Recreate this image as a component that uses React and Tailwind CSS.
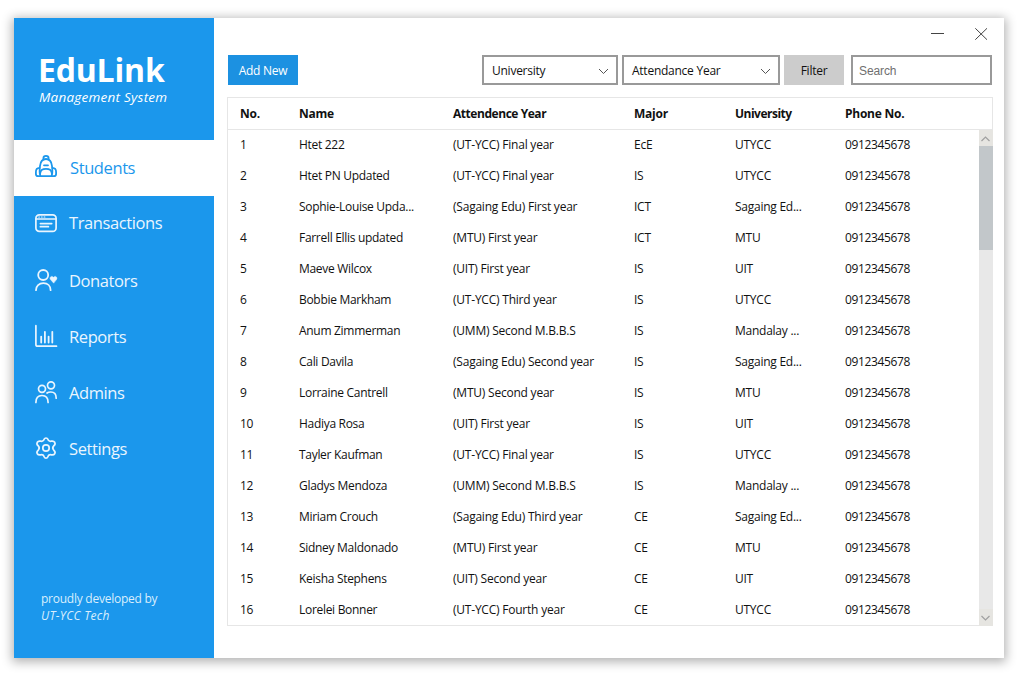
import React from 'react';

const icons = {
  students: (
    <g strokeWidth="1.8">
      <path d="M8.400 4V3.300a2.600 2.400 0 0 1 5.200 0V4" />
      <path d="M5.300 20.500C4.400 18 4.600 14 5 11c.5-4.400 2.700-7 6-7s5.500 2.600 6 7c.4 3 .6 7-.3 9.500" />
      <path d="M9 10.300h4" />
      <path d="M5.200 18.200c.2-2.700 2.600-4.300 5.800-4.300s5.600 1.600 5.800 4.300" />
      <path d="M4.500 12.900C2.200 13 .9 14.600.9 17v2c0 1.300.8 2.200 2.200 2.200h15.800c1.400 0 2.200-.9 2.200-2.200v-2c0-2.400-1.300-4-3.600-4.100" />
    </g>
  ),
  transactions: (
    <g strokeWidth="1.7">
      <rect x=".9" y="2.9" width="20.2" height="16.4" rx="3.4" />
      <path d="M1 7h20" strokeWidth="1.3" />
      <path d="M3.700 5h.8M6.400 5h.8M9.100 5h.8" strokeWidth="1.1" />
      <path d="M5.400 11.600h11.300M5.400 14.700h8" />
    </g>
  ),
  donators: (
    <g strokeWidth="1.8">
      <circle cx="8.2" cy="6" r="5" />
      <path d="M1 21.200C1 16.800 4.100 14.200 8.400 14.200s7.200 2.600 7.200 7" />
      <path d="M18.500 13.900l-3-3.300c-1.500-1.800.9-4.700 3-2.300 2.100-2.400 4.500.5 3 2.300z" fill="currentColor" strokeWidth=".5" />
    </g>
  ),
  reports: (
    <g strokeWidth="1.7">
      <path d="M.9.7v18.700c0 1.200.6 1.800 1.800 1.800h18.800" />
      <path d="M6.200 11.600v6M9.900 6.800v10.800M13.600 11.600v6M17.300 6.800v10.800" strokeWidth="1.8" />
    </g>
  ),
  admins: (
    <g strokeWidth="1.7">
      <circle cx="7" cy="7.8" r="3.5" />
      <circle cx="16" cy="4.3" r="3.5" />
      <path d="M.9 21.400c0-4.300 2.300-6.900 6.100-6.900s6.100 2.600 6.100 6.900" />
      <path d="M12 12c1-.7 2.300-1 3.800-1 3.500 0 5.400 2.400 5.400 6.200" />
    </g>
  ),
  settings: (
    <g strokeWidth="1.7">
      <circle cx="11" cy="11" r="3.2" />
      <path d="M9.300 2.100c.5-1.500 2.900-1.500 3.400 0 .5 1.700 1.800 2.500 3.500 2.100 1.800-.4 2.700-.2 3.500 1.100.8 1.400.5 2.300-.8 3.400-1.300 1.300-1.300 3.300 0 4.600 1.300 1.100 1.600 2 .8 3.400-.8 1.300-1.700 1.500-3.500 1.100-1.700-.4-3 .4-3.500 2.100-.5 1.500-2.900 1.500-3.400 0-.5-1.700-1.800-2.500-3.500-2.100-1.800.4-2.700.2-3.500-1.100-.8-1.400-.5-2.300.8-3.400 1.300-1.300 1.300-3.300 0-4.600C1.800 7.600 1.500 6.700 2.300 5.300c.8-1.300 1.700-1.500 3.500-1.100 1.700.4 3-.4 3.500-2.100z" />
    </g>
  ),
};

const nav = [
  ['students', 'Students', 'pb-1', 'ml-[13px] pt-1'],
  ['transactions', 'Transactions', 'pb-0.5', 'ml-3'],
  ['donators', 'Donators', '', 'ml-3 pt-0.5'],
  ['reports', 'Reports', '', 'ml-3 pt-0.5'],
  ['admins', 'Admins', '', 'ml-3 pt-0.5'],
  ['settings', 'Settings', '', 'ml-3 pt-0.5'],
];

const rows = [
  ['1', 'Htet 222', '(UT-YCC) Final year', 'EcE', 'UTYCC'],
  ['2', 'Htet PN Updated', '(UT-YCC) Final year', 'IS', 'UTYCC'],
  ['3', 'Sophie-Louise Upda...', '(Sagaing Edu) First year', 'ICT', 'Sagaing Ed...'],
  ['4', 'Farrell Ellis updated', '(MTU) First year', 'ICT', 'MTU'],
  ['5', 'Maeve Wilcox', '(UIT) First year', 'IS', 'UIT'],
  ['6', 'Bobbie Markham', '(UT-YCC) Third year', 'IS', 'UTYCC'],
  ['7', 'Anum Zimmerman', '(UMM) Second M.B.B.S', 'IS', 'Mandalay ...'],
  ['8', 'Cali Davila', '(Sagaing Edu) Second year', 'IS', 'Sagaing Ed...'],
  ['9', 'Lorraine Cantrell', '(MTU) Second year', 'IS', 'MTU'],
  ['10', 'Hadiya Rosa', '(UIT) First year', 'IS', 'UIT'],
  ['11', 'Tayler Kaufman', '(UT-YCC) Final year', 'IS', 'UTYCC'],
  ['12', 'Gladys Mendoza', '(UMM) Second M.B.B.S', 'IS', 'Mandalay ...'],
  ['13', 'Miriam Crouch', '(Sagaing Edu) Third year', 'CE', 'Sagaing Ed...'],
  ['14', 'Sidney Maldonado', '(MTU) First year', 'CE', 'MTU'],
  ['15', 'Keisha Stephens', '(UIT) Second year', 'CE', 'UIT'],
  ['16', 'Lorelei Bonner', '(UT-YCC) Fourth year', 'CE', 'UTYCC'],
];

const headings = [
  ['No.', ''],
  ['Name', ''],
  ['Attendence Year', 'tracking-[-0.45px]'],
  ['Major', ''],
  ['University', 'tracking-[-0.5px]'],
  ['Phone No.', ''],
];

const cellTracking = ['', 'tracking-[-0.3px]', 'tracking-[-0.22px]', '', ''];

const grid = 'grid grid-cols-[59px_154px_181px_101px_110px_1fr] items-center pl-3 whitespace-nowrap';

function Icon({ name }) {
  return (
    <svg width="22" height="22" viewBox="0 0 22 22" fill="none" stroke="currentColor" strokeLinecap="round" strokeLinejoin="round" className="shrink-0 overflow-visible">
      {icons[name]}
    </svg>
  );
}

function Chevron() {
  return (
    <svg width="11" height="7" viewBox="0 0 11 7" fill="none" stroke="#555" strokeWidth="1">
      <path d="M1 1l4.500 4.500L10 1" />
    </svg>
  );
}

function Select({ label, width }) {
  return (
    <button className={`flex h-[30px] items-center justify-between border-2 border-[#999] pt-0.5 pr-[7px] pl-2 ${width}`}>
      <span>{label}</span>
      <Chevron />
    </button>
  );
}

function Sidebar() {
  return (
    <aside className="flex w-[200px] shrink-0 flex-col bg-[#1b97ec] text-white">
      <header className="h-[122px] pt-[32px] pl-6">
        <h1 className="text-[32px] leading-[40px] font-bold tracking-[-0.2px]">EduLink</h1>
        <p className="-mt-px pl-px text-[13.5px] leading-4 italic tracking-[0.25px]">Management System</p>
      </header>
      <nav className="flex flex-col">
        {nav.map(([id, label, pad, labelClass], i) => (
          <a key={id} className={`flex h-14 items-center pl-[21px] ${pad} ${i === 0 ? 'bg-white text-[#1b97ec]' : 'text-[#eaf5fe]'}`}>
            <Icon name={id} />
            <span className={`text-[16.5px] leading-6 tracking-[-0.4px] ${labelClass}`}>{label}</span>
          </a>
        ))}
      </nav>
      <footer className="mt-auto pb-[34px] pl-[27px] text-[12px] leading-[17px] text-[#d9eefd]">
        <p>proudly developed by</p>
        <p className="italic tracking-[0.3px]">UT-YCC Tech</p>
      </footer>
    </aside>
  );
}

function Scrollbar() {
  return (
    <div className="-mr-px -mb-px flex w-[14px] flex-col bg-[#e8e8e8]">
      <div className="flex h-4 items-center justify-center bg-[#e6e5e1] pr-px pt-px">
        <svg width="9" height="6" viewBox="0 0 9 6" fill="none" stroke="#a0a0a0" strokeWidth="1.2"><path d="M.5 5l4-4 4 4" /></svg>
      </div>
      <div className="h-[104px] bg-[#c2c7ca]" />
      <div className="mt-auto flex h-[17px] items-center justify-center bg-[#e6e5e1] pr-px pt-px">
        <svg width="9" height="6" viewBox="0 0 9 6" fill="none" stroke="#a0a0a0" strokeWidth="1.2"><path d="M.5 1l4 4 4-4" /></svg>
      </div>
    </div>
  );
}

export default function App() {
  return (
    <div className="h-[675px] w-[1021px] overflow-hidden bg-white pt-[18px] pl-[14px] font-['Open_Sans','Noto_Sans',sans-serif] text-[12px] tracking-[-0.25px] text-[#111]">
      <div className="flex h-[640px] w-[990px] bg-white shadow-[0_2px_10px_2px_rgba(0,0,0,0.3)]">
        <Sidebar />
        <main className="flex min-w-0 flex-1 flex-col pr-[11px] pl-[13px]">
          <div className="flex h-[37px] justify-end pr-1 text-[#444]">
            <svg width="60" height="30" viewBox="0 0 60 30" fill="none" stroke="currentColor" strokeWidth="1">
              <path d="M2 15.500h13" />
              <path d="M46.300 10.300l11.700 11.400M58 10.300l-11.700 11.400" />
            </svg>
          </div>
          <div className="flex h-[30px] items-center pr-px pl-px">
            <button className="h-[30px] w-[70px] bg-[#1c91e1] pt-0.5 text-white">Add New</button>
            <div className="ml-auto flex gap-1">
              <Select label="University" width="w-[136px]" />
              <Select label="Attendance Year" width="w-[158px]" />
              <button className="h-[30px] w-[60px] bg-[#ccc] pt-0.5">Filter</button>
            </div>
            <input placeholder="Search" className="ml-[7px] h-[30px] w-[141px] border-2 border-[#999] px-1.5 pt-0.5 font-['Liberation_Sans',sans-serif] text-[12px] tracking-[-0.1px] placeholder:text-[#6f6f6f]" />
          </div>
          <section className="mt-3 flex h-[529px] flex-col border border-[#e6e6e6]">
            <div className={`${grid} h-8 shrink-0 border-b border-[#e6e6e6] font-bold`}>
              {headings.map(([h, cls]) => <span key={h} className={cls}>{h}</span>)}
            </div>
            <div className="flex min-h-0 flex-1">
              <div className="-mt-px flex-1">
                {rows.map((r) => (
                  <div key={r[0]} className={`${grid} h-[31px]`}>
                    {r.map((c, i) => <span key={i} className={cellTracking[i]}>{c}</span>)}
                    <span className="tracking-[-0.35px]">0912345678</span>
                  </div>
                ))}
              </div>
              <Scrollbar />
            </div>
          </section>
        </main>
      </div>
    </div>
  );
}
